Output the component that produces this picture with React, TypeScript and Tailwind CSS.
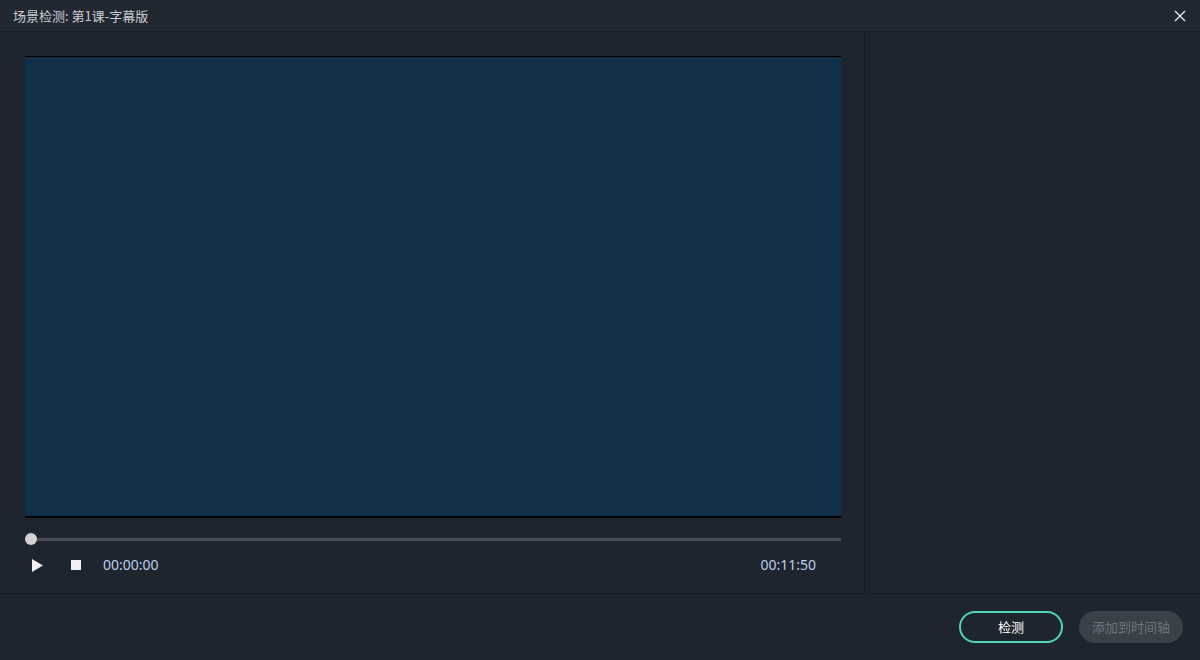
import React from "react";

export default function App() {
  const font = { fontFamily: '"Noto Sans CJK SC", "Noto Sans", sans-serif' };
  return (
    <div className="w-[1200px] h-[660px] flex flex-col bg-[#1f252e] overflow-hidden" style={font}>
      <div className="h-[32px] shrink-0 flex items-center justify-between bg-[#222832] border-b border-[#191e25] pl-[13px] pr-[14px]">
        <span className="text-[13px] text-[#c9cdd3] leading-none">场景检测: 第1课-字幕版</span>
        <svg width="12" height="12" viewBox="0 0 12 12" className="text-[#e6e8eb]">
          <path d="M1 1 L11 11 M11 1 L1 11" stroke="currentColor" strokeWidth="1.4" />
        </svg>
      </div>
      <div className="flex-1 flex min-h-0">
        <div className="w-[865px] shrink-0 border-r border-[#171c22] pt-[24px] pl-[25px] pr-[23px] flex flex-col">
          <div className="w-[816px] h-[462px] bg-[#11314a] border-t border-black border-b-2" />
          <div className="relative w-[816px] h-[12px] mt-[15px] flex items-center">
            <div className="w-full h-[3px] bg-[#4a4f57]" />
            <div className="absolute left-0 top-0 w-[12px] h-[12px] rounded-full bg-[#d0d2d4]" />
          </div>
          <div className="w-[816px] flex items-center mt-[12px] h-[16px]">
            <svg width="11" height="13" viewBox="0 0 11 13" className="ml-[7px]">
              <path d="M0 0 L11 6.5 L0 13 Z" fill="#eef0f2" />
            </svg>
            <div className="w-[10px] h-[10px] bg-[#eef0f2] ml-[28px]" />
            <span className="ml-[22px] text-[14px] text-[#b9d0ea] leading-none" style={{ fontFamily: '"Noto Sans", sans-serif' }}>00:00:00</span>
            <span className="ml-auto mr-[25px] text-[14px] text-[#b9d0ea] leading-none" style={{ fontFamily: '"Noto Sans", sans-serif' }}>00:11:50</span>
          </div>
        </div>
        <div className="flex-1" />
      </div>
      <div className="h-[67px] shrink-0 border-t border-[#171c22] flex items-center justify-end pr-[17px] gap-[16px]">
        <button className="w-[104px] h-[32px] rounded-full border-2 border-[#4fd6b8] text-white text-[13px] flex items-center justify-center">检测</button>
        <button className="w-[104px] h-[32px] rounded-full bg-[#3b4149] text-[#6e747c] text-[13px] flex items-center justify-center">添加到时间轴</button>
      </div>
    </div>
  );
}
